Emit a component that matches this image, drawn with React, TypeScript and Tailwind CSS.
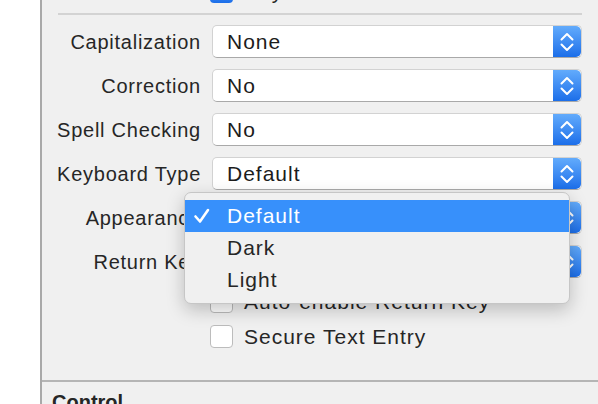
import React from 'react';

const font = { fontFamily: '"Liberation Sans", Arial, sans-serif' };

const Stepper = () => (
  <div className="w-[28px] h-full shrink-0 rounded-r-[5px] bg-gradient-to-b from-[#62abfc] to-[#1b6ee9] flex items-center justify-center">
    <svg width="28" height="33" viewBox="0 0 28 33" fill="none">
      <path d="M8.5 14.5 L14 9 L19.5 14.5" stroke="white" strokeWidth="2" strokeLinecap="round" strokeLinejoin="round" />
      <path d="M8.5 19.5 L14 25 L19.5 19.5" stroke="white" strokeWidth="2" strokeLinecap="round" strokeLinejoin="round" />
    </svg>
  </div>
);

const PopupRow = ({ label, value }: { label: string; value: string }) => (
  <div className="flex items-center h-[33px] shrink-0">
    <div className="w-[159px] text-right text-[20px] tracking-[0.75px] text-[#262626] whitespace-nowrap">{label}</div>
    <div className="ml-[11px] w-[370px] h-[33px] flex rounded-[5px] bg-white border border-[#d2d2d2] border-b-[#a9a9a9] overflow-hidden">
      <div className="flex-1 flex items-center pl-[14px] text-[21px] tracking-[1px] text-[#1c1c1c]">{value}</div>
      <Stepper />
    </div>
  </div>
);

const CheckRow = ({ label }: { label: string }) => (
  <div className="flex items-center h-[23px] pl-[168px] shrink-0">
    <div className="w-[23px] h-[23px] rounded-[4px] bg-white border border-[#bcbcbc]" />
    <span className="ml-[11px] text-[21px] tracking-[1px] text-[#262626] whitespace-nowrap">{label}</span>
  </div>
);

export default function App() {
  return (
    <div className="relative w-[598px] h-[404px] overflow-hidden flex bg-white" style={font}>
      <div className="w-[40px] shrink-0 bg-white" />
      <div className="flex-1 bg-[#f0f0f0] border-l-2 border-[#a9a9a9] flex flex-col">
        {/* clipped row from above */}
        <div className="mt-[-20px] flex items-center h-[23px] pl-[168px] shrink-0">
          <div className="w-[23px] h-[23px] rounded-[4px] bg-gradient-to-b from-[#62abfc] to-[#1b6ee9]" />
          <span className="ml-[11px] text-[21px] tracking-[1px] text-[#262626]">Keyboard</span>
        </div>
        <div className="mt-[10px] ml-[16px] mr-[16px] h-[2px] shrink-0 bg-[#d3d3d3]" />
        <div className="mt-[10px] flex flex-col gap-[11px] shrink-0">
          <PopupRow label="Capitalization" value="None" />
          <PopupRow label="Correction" value="No" />
          <PopupRow label="Spell Checking" value="No" />
          <PopupRow label="Keyboard Type" value="Default" />
          <PopupRow label="Appearance" value="Default" />
          <PopupRow label="Return Key" value="Default" />
        </div>
        <div className="mt-[12px] flex flex-col gap-[12px] shrink-0">
          <CheckRow label="Auto-enable Return Key" />
          <CheckRow label="Secure Text Entry" />
        </div>
        <div className="mt-[32px] h-[2px] shrink-0 bg-[#b5b5b5]" />
        <div className="mt-[8px] pl-[10px] text-[20px] font-bold text-[#262626] leading-[24px] shrink-0">Control</div>
      </div>

      {/* open popup menu */}
      <div className="absolute left-[184px] top-[192px] w-[386px] h-[112px] rounded-[7px] bg-[#f0f0f0] border border-[#c6c6c6] shadow-[0_6px_18px_rgba(0,0,0,0.22)] py-[7px]">
        <div className="h-[32px] bg-[#3790fb] flex items-center text-white text-[21px] tracking-[1px]">
          <svg width="42" height="32" viewBox="0 0 42 32" fill="none">
            <path d="M10.5 16.5 L15 21.5 L23 10" stroke="white" strokeWidth="2.6" strokeLinecap="round" strokeLinejoin="round" />
          </svg>
          <span>Default</span>
        </div>
        <div className="h-[32px] flex items-center pl-[42px] text-[21px] tracking-[1px] text-[#262626]">Dark</div>
        <div className="h-[32px] flex items-center pl-[42px] text-[21px] tracking-[1px] text-[#262626]">Light</div>
      </div>
    </div>
  );
}
